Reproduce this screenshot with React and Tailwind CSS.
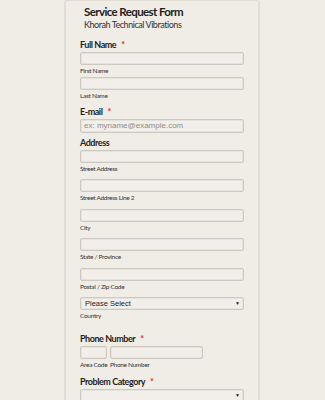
const font = { fontFamily: 'Lato, Roboto, sans-serif' }

function Input({ className = '' }) {
  return (
    <div className={`h-[13px] rounded-[2px] border border-[#cdc8c0] bg-[#f2efea] shadow-[inset_0_0_0_1px_#e6e2dc] ${className}`} />
  )
}

function Sub({ children, className = '' }) {
  return <div className={`whitespace-nowrap text-[6.5px] leading-[10px] tracking-[-0.3px] text-[#333] ${className}`}>{children}</div>
}

function Label({ children, required, className = '' }) {
  return (
    <div className={`text-[9px] leading-[12px] font-bold tracking-[-0.45px] text-[#222] ${className}`}>
      {children}
      {required && <span className="ml-[5px] text-[#e0282a]">*</span>}
    </div>
  )
}

function Select({ text, className = '' }) {
  return (
    <div className={`flex h-[13px] items-center justify-between rounded-[2px] border border-[#cdc8c0] bg-[#f2efea] pl-[4px] pr-[3px] shadow-[inset_0_0_0_1px_#e6e2dc] ${className}`}>
      <span className="font-['Liberation_Sans'] text-[7.5px] text-[#222]">{text}</span>
      <span className="text-[5px] leading-none text-[#222]">▼</span>
    </div>
  )
}

export default function App() {
  return (
    <div className="h-[400px] w-[325px] overflow-hidden bg-[#f0ece6]" style={font}>
      <div className="ml-[64px] min-h-[420px] w-[196px] rounded-t-[3px] border-x-[2px] border-t border-[#e2ddd5] pl-[14px] pr-[14px]">
        {/* Header */}
        <div className="pl-[4px] pt-[3px]">
          <div className="text-[11.5px] leading-[15px] font-bold tracking-[-0.6px] text-[#222]">Service Request Form</div>
          <div className="text-[9px] leading-[12px] tracking-[-0.45px] text-[#333]">Khorah Technical Vibrations</div>
        </div>

        {/* Full name */}
        <Label required className="mt-[8px]">Full Name</Label>
        <Input className="mt-[1px]" />
        <Sub className="mt-[1px]">First Name</Sub>
        <Input className="mt-[1px]" />
        <Sub className="mt-[1px]">Last Name</Sub>

        {/* Email */}
        <Label required className="mt-[5px]">E-mail</Label>
        <div className="mt-[1px] flex h-[14px] items-center rounded-[2px] border border-[#cdc8c0] bg-[#f2efea] pl-[3px] shadow-[inset_0_0_0_1px_#e6e2dc]">
          <span className="font-['Liberation_Sans'] text-[8px] text-[#8f8b86]">ex: myname@example.com</span>
        </div>

        {/* Address */}
        <Label className="mt-[4px]">Address</Label>
        <Input className="mt-[1px]" />
        <Sub className="mt-[1px]">Street Address</Sub>
        <Input className="mt-[5px]" />
        <Sub className="mt-[1px]">Street Address Line 2</Sub>
        <Input className="mt-[6px]" />
        <Sub className="mt-[1px]">City</Sub>
        <Input className="mt-[5px]" />
        <Sub className="mt-[1px]">State / Province</Sub>
        <Input className="mt-[6px]" />
        <Sub className="mt-[1px]">Postal / Zip Code</Sub>
        <Select text="Please Select" className="mt-[5px]" />
        <Sub className="mt-[1px]">Country</Sub>

        {/* Phone */}
        <Label required className="mt-[12px]">Phone Number</Label>
        <div className="mt-[1px] flex gap-[3px]">
          <div className="w-[27px]">
            <Input />
            <Sub className="mt-[1px]">Area Code</Sub>
          </div>
          <div className="w-[93px]">
            <Input />
            <Sub className="mt-[1px]">Phone Number</Sub>
          </div>
        </div>

        {/* Problem category */}
        <Label required className="mt-[6px]">Problem Category</Label>
        <Select text="" className="mt-[1px]" />
      </div>
    </div>
  )
}
